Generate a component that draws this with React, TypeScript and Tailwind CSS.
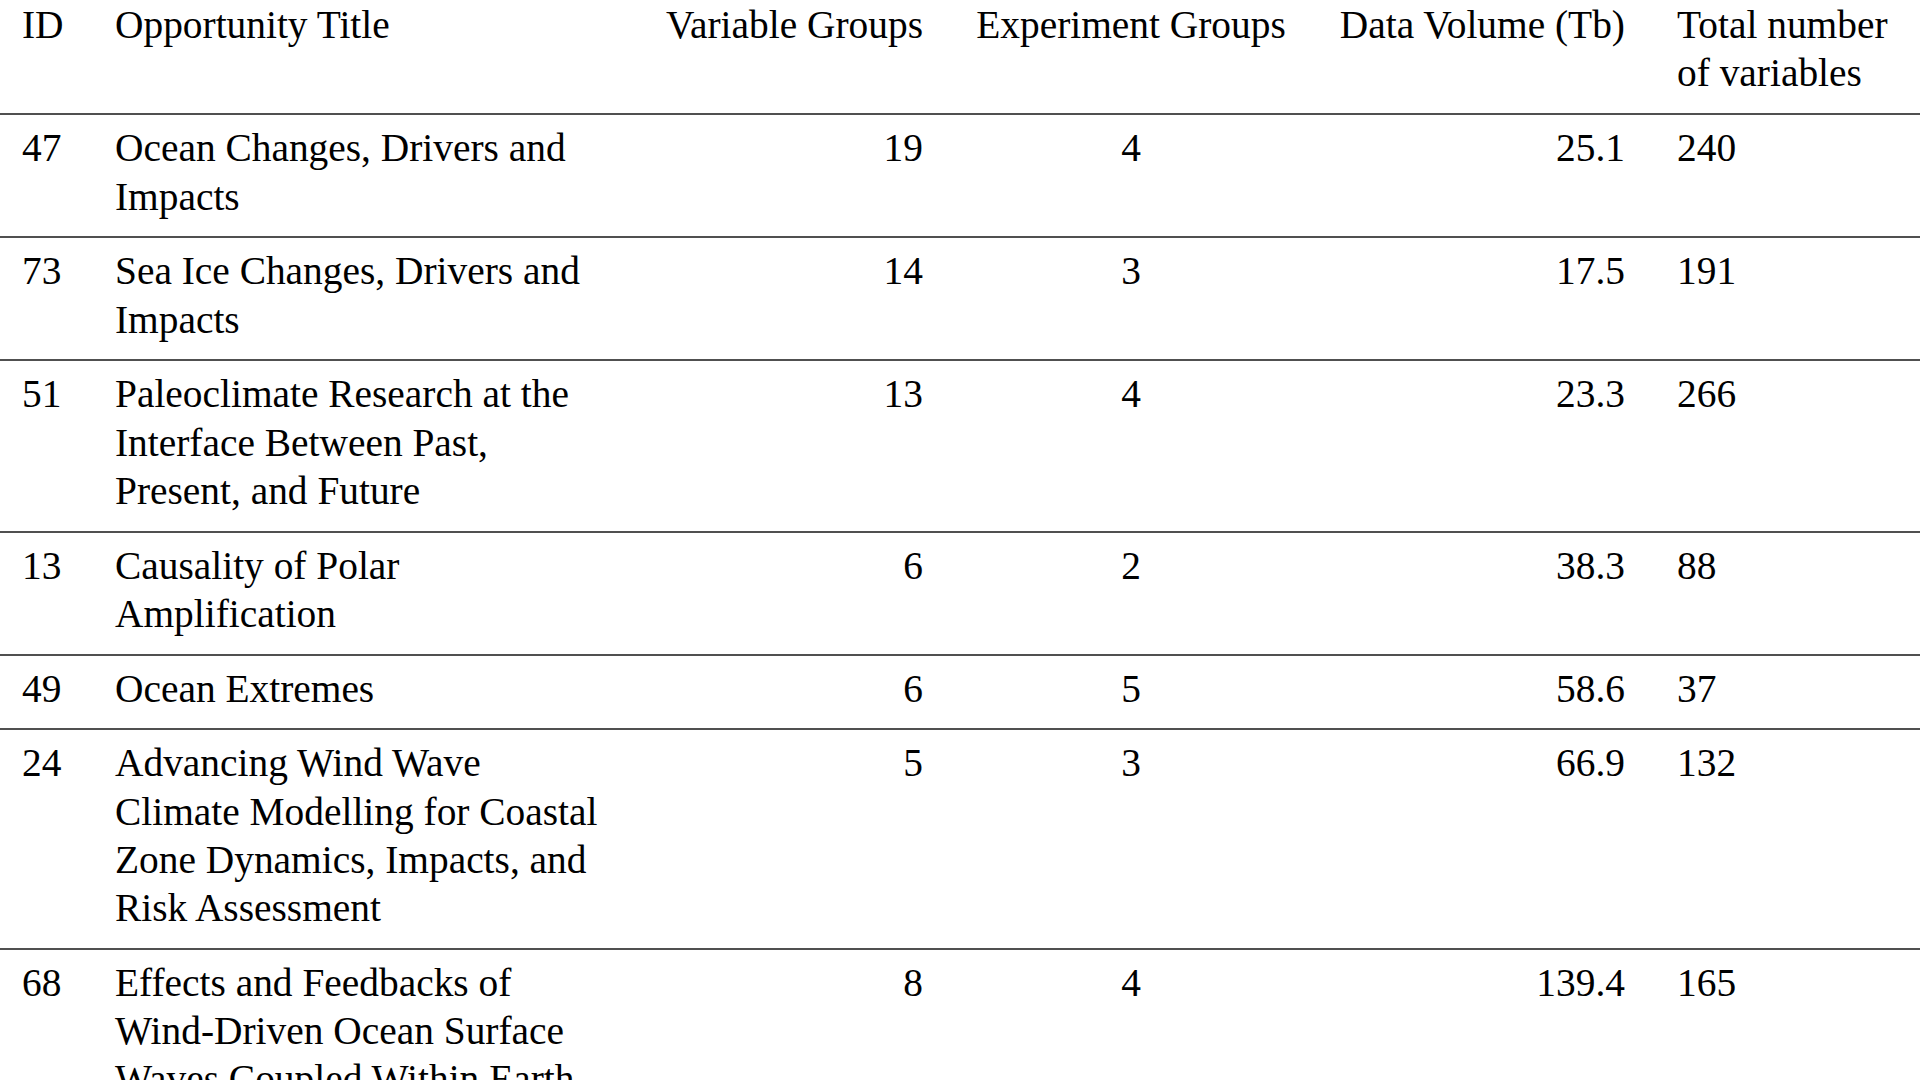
import React from "react";

type Row = {
  id: string;
  title: string;
  vg: string;
  eg: string;
  dv: string;
  total: string;
};

const rows: Row[] = [
  { id: "47", title: "Ocean Changes, Drivers and Impacts", vg: "19", eg: "4", dv: "25.1", total: "240" },
  { id: "73", title: "Sea Ice Changes, Drivers and Impacts", vg: "14", eg: "3", dv: "17.5", total: "191" },
  { id: "51", title: "Paleoclimate Research at the Interface Between Past, Present, and Future", vg: "13", eg: "4", dv: "23.3", total: "266" },
  { id: "13", title: "Causality of Polar Amplification", vg: "6", eg: "2", dv: "38.3", total: "88" },
  { id: "49", title: "Ocean Extremes", vg: "6", eg: "5", dv: "58.6", total: "37" },
  { id: "24", title: "Advancing Wind Wave Climate Modelling for Coastal Zone Dynamics, Impacts, and Risk Assessment", vg: "5", eg: "3", dv: "66.9", total: "132" },
  { id: "68", title: "Effects and Feedbacks of Wind-Driven Ocean Surface Waves Coupled Within Earth System Models", vg: "8", eg: "4", dv: "139.4", total: "165" },
];

const cell = "align-top pt-[9px] pb-[15.6px] border-b-2 border-[#505050]";
const head = "align-top font-normal pt-[1px] pb-[16px] border-b-2 border-[#505050]";

export default function App() {
  return (
    <div
      className="h-screen w-full overflow-hidden bg-white text-black"
      style={{ fontFamily: '"Liberation Serif", "Times New Roman", serif' }}
    >
      <table className="w-[1920px] table-fixed border-collapse text-[39.4px] leading-[48.2px]">
        <colgroup>
          <col className="w-[89px]" />
          <col className="w-[546px]" />
          <col className="w-[314px]" />
          <col className="w-[364px]" />
          <col className="w-[338px]" />
          <col className="w-[269px]" />
        </colgroup>
        <thead>
          <tr>
            <th className={`${head} pl-[22px] pr-[26px] text-left`}>ID</th>
            <th className={`${head} px-[26px] text-left`}>Opportunity Title</th>
            <th className={`${head} px-[26px] text-right whitespace-nowrap`}>Variable Groups</th>
            <th className={`${head} px-[26px] text-center whitespace-nowrap`}>Experiment Groups</th>
            <th className={`${head} px-[26px] text-right whitespace-nowrap`}>Data Volume (Tb)</th>
            <th className={`${head} px-[26px] text-left`}>Total number of variables</th>
          </tr>
        </thead>
        <tbody>
          {rows.map((r) => (
            <tr key={r.id}>
              <td className={`${cell} pl-[22px] pr-[26px] text-left`}>{r.id}</td>
              <td className={`${cell} px-[26px] text-left`}>{r.title}</td>
              <td className={`${cell} px-[26px] text-right`}>{r.vg}</td>
              <td className={`${cell} px-[26px] text-center`}>{r.eg}</td>
              <td className={`${cell} px-[26px] text-right`}>{r.dv}</td>
              <td className={`${cell} px-[26px] text-left`}>{r.total}</td>
            </tr>
          ))}
        </tbody>
      </table>
    </div>
  );
}
